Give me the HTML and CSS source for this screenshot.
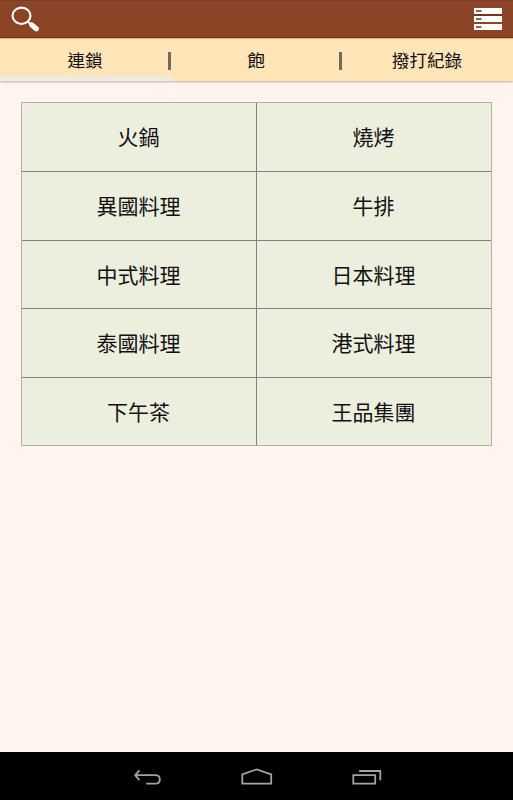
FILE: index.html
```html
<!DOCTYPE html>
<html lang="zh-Hant">
<head>
  <meta charset="UTF-8" />
  <meta name="viewport" content="width=device-width, initial-scale=1.0"/>
  <title>連鎖</title>
  <link rel="stylesheet" href="styles.css">
</head>
<body>

  <header class="topbar">
    <svg width="30" height="28" viewBox="0 0 30 28">
      <ellipse cx="10.5" cy="9.8" rx="9" ry="8.2" fill="none" stroke="#fff" stroke-width="2.1"/>
      <path d="M16.8 15.8 L20 18.2" stroke="#fff" stroke-width="2"/>
      <path d="M20.8 18.9 L25.3 22.7" stroke="#fff" stroke-width="5.2" stroke-linecap="round"/>
    </svg>
    <svg class="menu-icon" width="28" height="23" viewBox="0 0 28 23">
      <path d="M0 0h28v6H0z M0 8h28v6H0z M0 16h28v6H0z" fill="#fff"/>
      <path d="M2 3h5.5 M2 11h5.5 M2 19h5.5" stroke="#6d2a1c" stroke-width="1.4"/>
      <path d="M0 7h28" stroke="#751f0c" stroke-width="1"/>
    </svg>
  </header>

  <nav class="tabs">
    <div class="tab active">連鎖</div>
    <div class="tab">飽</div>
    <div class="tab">撥打紀錄</div>
  </nav>

  <main class="content">
    <div class="grid">
      <div class="cell">火鍋</div>
      <div class="cell">燒烤</div>
      <div class="cell">異國料理</div>
      <div class="cell">牛排</div>
      <div class="cell">中式料理</div>
      <div class="cell">日本料理</div>
      <div class="cell">泰國料理</div>
      <div class="cell">港式料理</div>
      <div class="cell">下午茶</div>
      <div class="cell">王品集團</div>
    </div>
  </main>

  <footer class="navbar">
    <svg width="30" height="20" viewBox="0 0 30 20">
      <path d="M3.2 7.2 H23 Q27.8 7.2 27.8 11.4 Q27.8 15.7 23 15.7 H14.2 M7.4 2.3 L3.2 7.2 L7.4 12.1"/>
    </svg>
    <svg width="32" height="20" viewBox="0 0 32 20">
      <path d="M1.3 15.7 V6.5 L15.7 1.4 L30.2 6.5 V15.7 Z"/>
    </svg>
    <svg width="30" height="20" viewBox="0 0 30 20">
      <path d="M1.3 7.2 H23.2 V15.7 H1.3 Z M7.2 3 H28.3 V12.3"/>
    </svg>
  </footer>

</body>
</html>
```

FILE: styles.css
```css
* {
  box-sizing: border-box;
}

body {
  display: flex;
  flex-direction: column;
  height: 100vh;
  margin: 0;
  overflow: hidden;
  background-color: #fff4ef;
  color: #111;
  font-family: "Noto Sans CJK TC", sans-serif;
}

.topbar {
  display: flex;
  justify-content: space-between;
  height: 38px;
  padding: 5px 11px 0;
  background-color: #8b4526;
  border-top: 1px solid #7b3e25;
  border-bottom: 1px solid #7a3515;
}

.menu-icon {
  margin-top: 2px;
}

.tabs {
  display: grid;
  grid-template-columns: repeat(3, 1fr);
  height: 43px;
  background-color: #ffe5b7;
  border-top: 1px solid #d9b083;
  box-shadow: 0 1px 2px rgba(90, 70, 60, 0.4);
}

.tab {
  display: flex;
  align-items: center;
  justify-content: center;
  position: relative;
  padding-right: 1px;
  font-size: 17.6px;
  line-height: 24px;
}

.tab.active {
  border-bottom: 4px solid #ececea;
  padding-top: 4px;
}

/* divider between tabs */
.tab + .tab::before {
  content: "";
  position: absolute;
  left: -3px;
  top: 13px;
  width: 3px;
  height: 18px;
  background-color: #726b5a;
}

.content {
  flex: 1;
  padding: 21px 21px 0;
}

.grid {
  display: grid;
  grid-template-columns: 1fr 1fr;
  grid-template-rows: 68px 68px 67px 68px 67px;
  gap: 1px;
  background-color: #81837a;
  border: 1px solid #b0b2a2;
}

.cell {
  display: flex;
  align-items: center;
  justify-content: center;
  padding: 0 1px 2px 0;
  background-color: #eceede;
  font-size: 21px;
  line-height: 30px;
}

.navbar {
  display: flex;
  justify-content: center;
  gap: 79px;
  height: 48px;
  padding-top: 16px;
  background-color: #000;
}

.navbar svg {
  fill: none;
  stroke: #a3a3a3;
  stroke-width: 1.8;
}
```
